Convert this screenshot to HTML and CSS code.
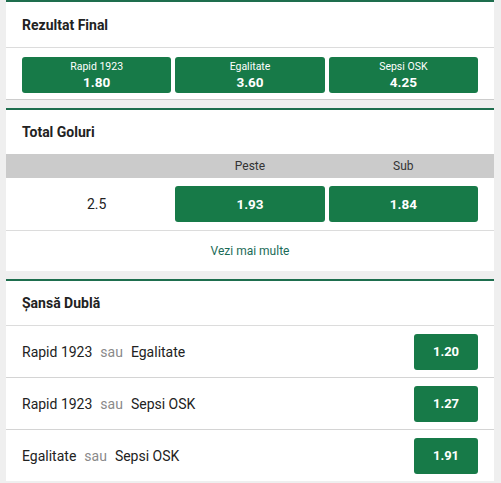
FILE: index.html
```html
<!DOCTYPE html>
<html lang="ro">
  <head>
    <meta charset="UTF-8" />
    <meta name="viewport" content="width=device-width, initial-scale=1.0" />
    <title>Cote</title>
    <link rel="stylesheet" href="styles.css">
  </head>
  <body>
    <div class="market first">
      <div class="market-title">Rezultat Final</div>
      <div class="odds-row three">
        <button class="odd">
          <span class="odd-label">Rapid 1923</span>
          <span class="odd-value">1.80</span>
        </button>
        <button class="odd">
          <span class="odd-label">Egalitate</span>
          <span class="odd-value">3.60</span>
        </button>
        <button class="odd">
          <span class="odd-label">Sepsi OSK</span>
          <span class="odd-value">4.25</span>
        </button>
      </div>
    </div>

    <div class="market">
      <div class="market-title no-border">Total Goluri</div>
      <div class="grid-head">
        <span></span>
        <span>Peste</span>
        <span>Sub</span>
      </div>
      <div class="grid-row">
        <span class="line">2.5</span>
        <button class="odd"><span class="odd-value">1.93</span></button>
        <button class="odd"><span class="odd-value">1.84</span></button>
      </div>
      <a class="more" href="#">Vezi mai multe</a>
    </div>

    <div class="market last">
      <div class="market-title">Șansă Dublă</div>
      <div class="dc-row">
        <span class="dc-text">Rapid 1923<span class="or">sau</span>Egalitate</span>
        <button class="odd small"><span class="odd-value">1.20</span></button>
      </div>
      <div class="dc-row">
        <span class="dc-text">Rapid 1923<span class="or">sau</span>Sepsi OSK</span>
        <button class="odd small"><span class="odd-value">1.27</span></button>
      </div>
      <div class="dc-row">
        <span class="dc-text">Egalitate<span class="or">sau</span>Sepsi OSK</span>
        <button class="odd small"><span class="odd-value">1.91</span></button>
      </div>
    </div>
  </body>
</html>
```

FILE: styles.css
```css
body {
  margin: 0;
  padding: 0 7px 0 6px;
  background-color: #efefef;
  font-family: Roboto, "Noto Sans", sans-serif;
  color: #222;
}
.market {
  background-color: #fff;
  border-top: 2px solid #1e6e4e;
  margin-bottom: 8px;
}
.market.last {
  margin-bottom: 0;
}
.market-title {
  height: 44px;
  display: flex;
  align-items: center;
  padding: 0 16px;
  font-size: 14px;
  font-weight: bold;
  border-bottom: 1px solid #dcdcdc;
}
.first .market-title {
  height: 45px;
}
.market-title.no-border {
  border-bottom: none;
}
.odd {
  display: flex;
  flex-direction: column;
  align-items: center;
  justify-content: center;
  height: 36px;
  border: none;
  border-radius: 3px;
  background-color: #177a48;
  color: #fff;
  font-family: inherit;
  padding: 0;
  cursor: pointer;
}
.odd:hover {
  background-color: #136a3e;
}
.odd-label {
  font-size: 10.5px;
  line-height: 14px;
}
.odd-value {
  font-size: 13.5px;
  font-weight: bold;
  line-height: 17px;
}
.odds-row {
  display: grid;
  grid-template-columns: repeat(3, 1fr);
  gap: 4px;
  padding: 9px 16px 6px;
  border-bottom: 1px solid #ccc;
}
.grid-head {
  display: grid;
  grid-template-columns: repeat(3, 1fr);
  gap: 4px;
  padding: 0 16px;
  height: 24px;
  align-items: center;
  background-color: #cbcbcb;
  font-size: 12px;
  color: #333;
  text-align: center;
}
.grid-row {
  display: grid;
  grid-template-columns: repeat(3, 1fr);
  gap: 4px;
  padding: 8px 16px;
  align-items: center;
  border-bottom: 1px solid #dcdcdc;
}
.line {
  text-align: center;
  font-size: 14px;
}
.more {
  display: block;
  height: 40px;
  line-height: 40px;
  text-align: center;
  font-size: 12px;
  color: #1b6b57;
  text-decoration: none;
}
.dc-row {
  display: flex;
  align-items: center;
  justify-content: space-between;
  height: 51px;
  padding: 0 16px;
  border-bottom: 1px solid #d4d4d4;
}
.dc-row:last-child {
  border-bottom: none;
}
.dc-text {
  font-size: 14px;
}
.or {
  color: #8a8a8a;
  margin: 0 8px;
}
.odd.small {
  width: 64px;
}
.odd.small .odd-value {
  font-size: 13px;
}
```
